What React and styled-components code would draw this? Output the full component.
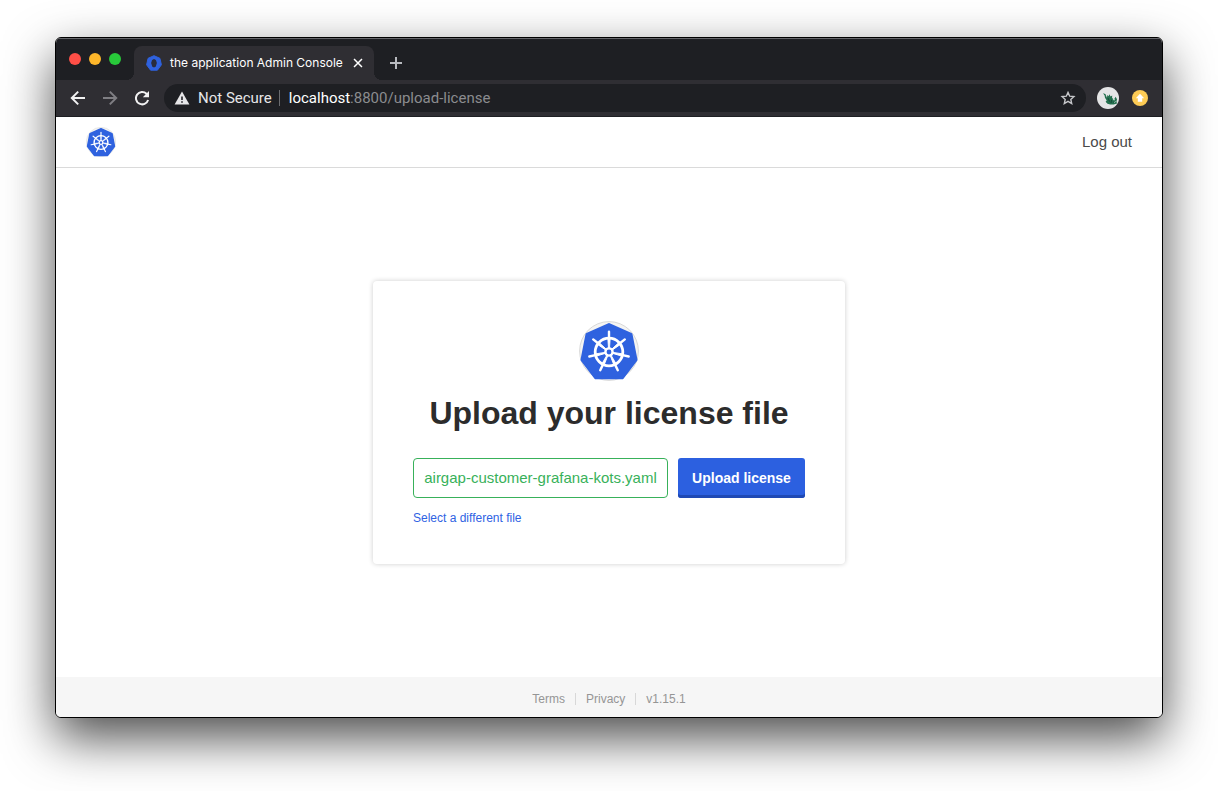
import React from "react";
import styled, { createGlobalStyle } from "styled-components";

const uiFont = 'Inter, Roboto, sans-serif';
const pageFont = '"Liberation Sans", Arial, sans-serif';

const GlobalStyle = createGlobalStyle`
  *, *::before, *::after { box-sizing: border-box; }
  body { margin: 0; background: #ffffff; font-family: ${pageFont}; }
  button { font: inherit; color: inherit; border: 0; padding: 0; background: none; cursor: pointer; }
  a { text-decoration: none; }
  svg { display: block; }
`;

const Desktop = styled.div`
  display: flex;
  min-height: 100vh;
  padding: 37px 55px 73px;
  overflow: hidden;
`;

const BrowserWindow = styled.div`
  flex: 1;
  min-width: 0;
  display: flex;
  flex-direction: column;
  border: 1px solid #000000;
  border-radius: 6px;
  overflow: hidden;
  background: #ffffff;
  box-shadow: 0 20px 50px rgba(0, 0, 0, 0.7);
`;

const TabStrip = styled.header`
  display: flex;
  align-items: flex-end;
  height: 42px;
  padding-left: 13px;
  background: #1e1f23;
  box-shadow: inset 0 1px 0 #65666a;
`;

const TrafficLights = styled.div`
  display: flex;
  align-items: center;
  gap: 8px;
  height: 42px;
  margin-right: 13px;
`;

const Light = styled.button`
  width: 12px;
  height: 12px;
  border-radius: 50%;
  && { background: ${(p) => p.$color}; }
`;

const Tab = styled.div`
  position: relative;
  display: flex;
  align-items: center;
  gap: 8px;
  width: 240px;
  height: 34px;
  padding: 0 10px 0 12px;
  border-radius: 8px 8px 0 0;
  background: #2f2e33;
  color: #ffffff;
  font: 400 12px/16px ${uiFont};
  &::before, &::after {
    content: "";
    position: absolute;
    bottom: 0;
    width: 8px;
    height: 8px;
  }
  &::before { left: -8px; background: radial-gradient(circle at 0 0, transparent 8px, #2f2e33 8px); }
  &::after { right: -8px; background: radial-gradient(circle at 100% 0, transparent 8px, #2f2e33 8px); }
`;

const TabTitle = styled.span`
  flex: 1;
  white-space: nowrap;
`;

const NewTab = styled.button`
  display: flex;
  align-items: center;
  height: 34px;
  margin-left: 14px;
`;

const Toolbar = styled.div`
  display: flex;
  align-items: center;
  height: 37px;
  padding: 0 12px;
  background: #2f2e33;
  border-bottom: 1px solid #1e1f23;
`;

const ToolButton = styled.button`
  display: grid;
  place-items: center;
  width: 20px;
  height: 20px;
  margin-right: 12px;
`;

const AddressBar = styled.div`
  flex: 1;
  display: flex;
  align-items: center;
  height: 28px;
  padding: 0 10px;
  border-radius: 14px;
  background: #1e1f23;
  color: #8b8c8f;
  font: 400 15px/20px Roboto, sans-serif;
`;

const Security = styled.span`
  display: flex;
  align-items: center;
  gap: 8px;
  color: #e6e6e8;
`;

const AddressDivider = styled.span`
  width: 1px;
  height: 16px;
  margin: 0 9px 0 7px;
  background: #6c6d70;
`;

const Url = styled.span`
  flex: 1;
  b { font-weight: 400; color: #ffffff; }
`;

const Extensions = styled.div`
  display: flex;
  align-items: center;
  gap: 13px;
  margin-left: 11px;
  padding-right: 2px;
`;

const NavBar = styled.nav`
  display: flex;
  align-items: center;
  justify-content: space-between;
  height: 51px;
  padding: 0 30px;
  border-bottom: 1px solid #dadada;
`;

const NavLink = styled.a`
  color: #4a4a4a;
  font-size: 15px;
  line-height: 20px;
`;

const Main = styled.main`
  flex: 1;
  display: grid;
  place-items: center;
`;

const Card = styled.section`
  display: flex;
  flex-direction: column;
  align-items: center;
  padding: 40px 40px 38px;
  border-radius: 4px;
  background: #ffffff;
  box-shadow: 0 0 5px rgba(0, 0, 0, 0.2);
`;

const Title = styled.h1`
  margin: 12px 0 25px;
  color: #2c2c2c;
  font-size: 32px;
  line-height: 40px;
  font-weight: 700;
`;

const UploadForm = styled.form`
  display: grid;
  grid-template-columns: 255px 127px;
  column-gap: 10px;
  row-gap: 12px;
`;

const FileName = styled.output`
  display: grid;
  place-items: center;
  height: 40px;
  border: 1px solid #38b15a;
  border-radius: 4px;
  color: #38b15a;
  font-size: 15px;
  line-height: 20px;
`;

const SubmitButton = styled.button`
  && {
    height: 40px;
    border-radius: 3px;
    background: #2c60e0;
    color: #ffffff;
    font-size: 14px;
    font-weight: 700;
    box-shadow: inset 0 -3px 0 #1f49b4;
  }
`;

const TextLink = styled.a`
  color: #2f63e3;
  font-size: 12px;
  line-height: 16px;
`;

const Footer = styled.footer`
  display: flex;
  align-items: center;
  justify-content: center;
  height: 40px;
  padding-top: 4px;
  background: #f6f6f6;
  color: #959595;
  font-size: 12px;
  line-height: 12px;
`;

const FooterItem = styled.span`
  padding: 0 10px;
  & + & { border-left: 1px solid #d8d8d8; }
  a { color: inherit; }
`;

const spokes = [0, 1, 2, 3, 4, 5, 6].map((n) => (n * 360) / 7);

function KubernetesLogo({ size }) {
  return (
    <svg width={size} height={size} viewBox="0 0 60 60" role="img" aria-label="Kubernetes">
      <circle cx="30" cy="30" r="29.4" fill="#f4f4f3" stroke="#d8d8d8" strokeWidth="1" />
      <path
        d="M30 3.5 52 13.4 57 38.8 43.3 56.8H16.7L3 38.8 8 13.4Z"
        fill="#2f62df"
        stroke="#2f62df"
        strokeWidth="3"
        strokeLinejoin="round"
      />
      <g stroke="#ffffff" fill="none">
        <circle cx="30" cy="31" r="13.8" strokeWidth="2.8" />
        {spokes.map((angle) => (
          <g key={angle} transform={`rotate(${angle} 30 31)`}>
            <path d="M30 17V10.8" strokeWidth="2.4" strokeLinecap="round" />
            <path d="M29.5 27 28.8 17h2.4L30.5 27Z" strokeWidth="0.9" fill="#ffffff" />
          </g>
        ))}
        <circle cx="30" cy="31" r="3.6" strokeWidth="2.4" fill="#2f62df" />
      </g>
    </svg>
  );
}

function Favicon() {
  return (
    <svg width="16" height="16" viewBox="0 0 16 16" aria-hidden="true">
      <path d="M8 .7 13.9 3.3 15.4 9.8 11.4 15.2H4.6L.6 9.8 2.1 3.3Z" fill="#2f62df" stroke="#2f62df" strokeLinejoin="round" />
      <path d="M8 3.9 9.9 4.9 10.9 8 9.8 11.4 8.9 12.2H7.1L6.2 11.4 5.1 8 6.1 4.9Z" fill="#292c3c" />
    </svg>
  );
}

function Avatar() {
  return (
    <svg width="22" height="22" viewBox="0 0 22 22" aria-hidden="true">
      <circle cx="11" cy="11" r="11" fill="#e5e5e6" />
      <path
        d="M6 6.3 8.4 7 9.4 9.4 10 10.8 10.3 8 11.6 9.2 12.4 7.2 13.6 9.4 15.2 8.4 15.1 11 17 12.4 18.6 9.8 20 12.2 19.5 14.5 20 16.6 16.6 17.6 13.2 17.4 10.5 16.8 8.6 14.8 9.7 13.4 8 10.8 7.6 8.5Z"
        fill="#24704e"
      />
      <path d="M11 11 12.6 14.6M14.6 12.8 14 16M17.5 14 17 16" stroke="#124434" strokeWidth="0.9" />
      <path d="M15.9 12.6 18 12.8M17.2 15.4 18.6 14.6" stroke="#d7eee5" strokeWidth="0.9" />
    </svg>
  );
}

function Icon({ color, size = 16, children }) {
  return (
    <svg width={size} height={size} viewBox="0 0 16 16" fill="none" stroke={color} strokeWidth="2" aria-hidden="true">
      {children}
    </svg>
  );
}

function BrowserChrome() {
  return (
    <>
      <TabStrip>
        <TrafficLights>
          <Light $color="#ff4f47" aria-label="Close window" />
          <Light $color="#fdb62a" aria-label="Minimize window" />
          <Light $color="#28c93a" aria-label="Zoom window" />
        </TrafficLights>
        <Tab>
          <Favicon />
          <TabTitle>the application Admin Console</TabTitle>
          <button aria-label="Close tab">
            <Icon color="#ffffff" size={12}>
              <path d="M2.7 2.7 13.3 13.3M13.3 2.7 2.7 13.3" />
            </Icon>
          </button>
        </Tab>
        <NewTab aria-label="New tab">
          <Icon color="#b8babf">
            <path d="M8 2V14M2 8H14" />
          </Icon>
        </NewTab>
      </TabStrip>
      <Toolbar>
        <ToolButton aria-label="Back">
          <Icon color="#f1f1f2">
            <path d="M15 8H2.5M8.2 1.6 1.8 8 8.2 14.4" />
          </Icon>
        </ToolButton>
        <ToolButton aria-label="Forward">
          <Icon color="#7f7e83">
            <path d="M1 8H13.5M7.8 1.6 14.2 8 7.8 14.4" />
          </Icon>
        </ToolButton>
        <ToolButton aria-label="Reload">
          <Icon color="#f1f1f2">
            <path d="M14.1 10A6.2 6.2 0 1 1 12.5 3.7L13.7 5" />
            <path d="M15 1V7.2H8.8Z" fill="#f1f1f2" stroke="none" />
          </Icon>
        </ToolButton>
        <AddressBar>
          <Security>
            <svg width="16" height="16" viewBox="0 0 16 16" aria-hidden="true">
              <path d="M8 1.5 15.4 14.5H.6Z" fill="#e6e6e8" />
              <path d="M7.2 6.4H8.8V10H7.2ZM7.2 11.2H8.8V12.8H7.2Z" fill="#1e1f23" />
            </svg>
            Not Secure
          </Security>
          <AddressDivider />
          <Url>
            <b>localhost</b>:8800/upload-license
          </Url>
          <button aria-label="Bookmark this page">
            <Icon color="#c6c7ca">
              <path d="M8 2.4 9.7 6.2 13.9 6.6 10.8 9.4 11.7 13.5 8 11.4 4.3 13.5 5.2 9.4 2.1 6.6 6.3 6.2Z" strokeWidth="1.4" />
            </Icon>
          </button>
        </AddressBar>
        <Extensions>
          <button aria-label="Profile">
            <Avatar />
          </button>
          <button aria-label="Update available">
            <svg width="16" height="16" viewBox="0 0 16 16" aria-hidden="true">
              <circle cx="8" cy="8" r="8" fill="#fdcb55" />
              <path d="M8 3.8 12.2 8.2H10.2V11.8H5.8V8.2H3.8Z" fill="#ffffff" />
            </svg>
          </button>
        </Extensions>
      </Toolbar>
    </>
  );
}

export default function App() {
  return (
    <>
      <GlobalStyle />
      <Desktop>
        <BrowserWindow>
          <BrowserChrome />
          <NavBar>
            <a href="#home">
              <KubernetesLogo size={30} />
            </a>
            <NavLink href="#logout">Log out</NavLink>
          </NavBar>
          <Main>
            <Card>
              <KubernetesLogo size={60} />
              <Title>Upload your license file</Title>
              <UploadForm onSubmit={(e) => e.preventDefault()}>
                <FileName>airgap-customer-grafana-kots.yaml</FileName>
                <SubmitButton type="submit">Upload license</SubmitButton>
                <TextLink href="#select">Select a different file</TextLink>
              </UploadForm>
            </Card>
          </Main>
          <Footer>
            <FooterItem><a href="#terms">Terms</a></FooterItem>
            <FooterItem><a href="#privacy">Privacy</a></FooterItem>
            <FooterItem>v1.15.1</FooterItem>
          </Footer>
        </BrowserWindow>
      </Desktop>
    </>
  );
}
